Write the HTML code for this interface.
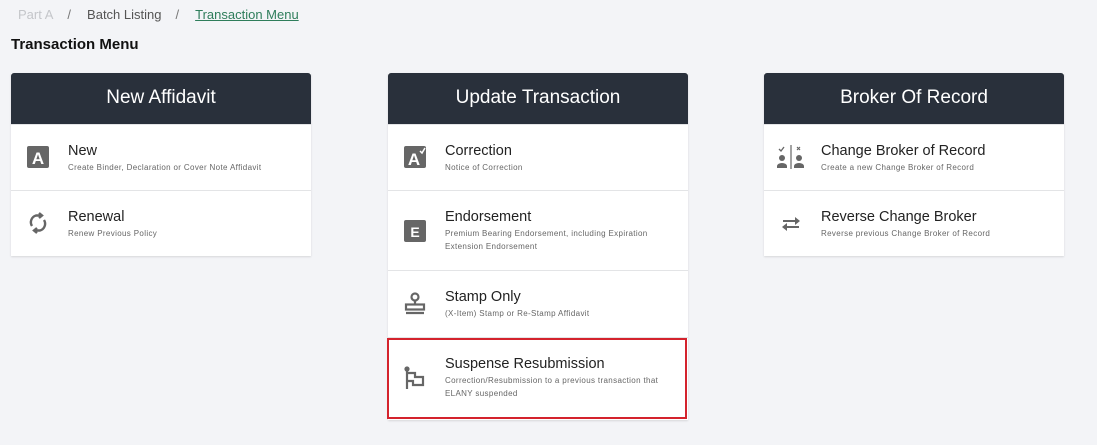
<!DOCTYPE html>
<html><head><style>
*{margin:0;padding:0;box-sizing:border-box}
body{width:1097px;height:445px;background:#f3f4f7;font-family:"Liberation Sans",sans-serif;position:relative;overflow:hidden}
.bc{position:absolute;left:18px;top:7px;font-size:13px;color:#555}
.bc .a{color:#c4c6ca}.bc .s{color:#777;margin:0 16px 0 14px}.bc .l{color:#2e7d5b;text-decoration:underline}
h1{position:absolute;left:11px;top:36px;font-size:15px;font-weight:bold;color:#111}
.card{position:absolute;top:73px;width:300px;background:#fff;box-shadow:0 1px 2px rgba(0,0,0,.12)}
.hd{height:51px;background:#29303b;color:#fff;font-size:19px;text-align:center;line-height:50px;border-radius:3px 3px 0 0}
.row{position:relative;border-top:1px solid #e3e4e6;height:66px}
.row:first-of-type{border-top:none}
.ic{position:absolute;left:15px;top:20px;width:24px;height:24px}
.t{position:absolute;left:57px;top:18px;font-size:14.5px;color:#222}
.d{position:absolute;left:57px;top:36px;font-size:8px;letter-spacing:.35px;color:#666;line-height:13px;width:222px}
.red{position:absolute;left:387px;top:338px;width:300px;height:81px;border:2px solid #d4232d}
</style></head><body>
<div class="bc"><span class="a">Part A</span><span class="s">/</span>Batch Listing<span class="s">/</span><span class="l">Transaction Menu</span></div>
<h1>Transaction Menu</h1>

<div class="card" style="left:11px">
<div class="hd">New Affidavit</div>
<div class="row"><svg class="ic" viewBox="0 0 24 24"><rect x="1" y="1" width="22" height="22" rx="2" fill="#666"/><text x="12" y="19" font-size="17" fill="#fff" text-anchor="middle" font-family="Liberation Sans" font-weight="bold">A</text></svg><div class="t">New</div><div class="d">Create Binder, Declaration or Cover Note Affidavit</div></div>
<div class="row"><svg class="ic" viewBox="0 0 24 24" fill="none" stroke="#666" stroke-width="2.4"><path d="M6 15a7 7 0 0 1 4-10.5h4"/><path d="M13 2l3 2.5-3 2.5" fill="#666"/><path d="M18 9a7 7 0 0 1-4 10.5h-4"/><path d="M11 22l-3-2.5 3-2.5" fill="#666"/></svg><div class="t">Renewal</div><div class="d">Renew Previous Policy</div></div>
</div>

<div class="card" style="left:388px">
<div class="hd">Update Transaction</div>
<div class="row"><svg class="ic" viewBox="0 0 24 24"><rect x="1" y="1" width="22" height="22" rx="2" fill="#666"/><text x="11" y="20" font-size="17" fill="#fff" text-anchor="middle" font-family="Liberation Sans" font-weight="bold">A</text><path d="M17 6l2 2 3-5" stroke="#fff" stroke-width="1.5" fill="none"/></svg><div class="t">Correction</div><div class="d">Notice of Correction</div></div>
<div class="row" style="height:80px"><svg class="ic" viewBox="0 0 24 24" style="top:28px"><rect x="1" y="1" width="22" height="22" rx="2" fill="#666"/><text x="12" y="18" font-size="14" fill="#fff" text-anchor="middle" font-family="Liberation Sans" font-weight="bold">E</text></svg><div class="t">Endorsement</div><div class="d" style="width:212px">Premium Bearing Endorsement, including Expiration Extension Endorsement</div></div>
<div class="row" style="height:67px"><svg class="ic" viewBox="0 0 24 24" fill="none" stroke="#666" stroke-width="2.2"><circle cx="12" cy="6" r="3.5"/><path d="M12 9.5v4"/><rect x="3" y="13.5" width="18" height="5"/><path d="M3 22h18"/></svg><div class="t">Stamp Only</div><div class="d">(X-Item) Stamp or Re-Stamp Affidavit</div></div>
<div class="row" style="height:83px"><svg class="ic" viewBox="0 0 24 24" fill="none" stroke="#666" stroke-width="2.2" style="top:28px"><circle cx="4" cy="3" r="1.5" fill="#666"/><path d="M4 4v19"/><path d="M4 7h8v4h8v8h-10v-4h-6"/></svg><div class="t">Suspense Resubmission</div><div class="d">Correction/Resubmission to a previous transaction that ELANY suspended</div></div>
</div>

<div class="card" style="left:764px">
<div class="hd">Broker Of Record</div>
<div class="row"><svg class="ic" viewBox="0 0 28 24" style="width:28px;left:13px"><path d="M2 4l2 2 3-4" stroke="#666" stroke-width="1.3" fill="none"/><circle cx="5" cy="13" r="3" fill="#666"/><path d="M0 23v-2a5 3 0 0 1 10 0v2z" fill="#666"/><path d="M14 0v24" stroke="#666" stroke-width="1.2"/><path d="M20 2l3 3M23 2l-3 3" stroke="#666" stroke-width="1.2"/><circle cx="22" cy="13" r="3" fill="#666"/><path d="M17 23v-2a5 3 0 0 1 10 0v2z" fill="#666"/></svg><div class="t">Change Broker of Record</div><div class="d">Create a new Change Broker of Record</div></div>
<div class="row"><svg class="ic" viewBox="0 0 24 24" fill="#666"><path d="M4 9h12v-3l5 4-5 4v-3h-12z"/><path d="M20 15h-12v-3l-5 4 5 4v-3h12z"/></svg><div class="t">Reverse Change Broker</div><div class="d">Reverse previous Change Broker of Record</div></div>
</div>

<div class="red"></div>
</body></html>
